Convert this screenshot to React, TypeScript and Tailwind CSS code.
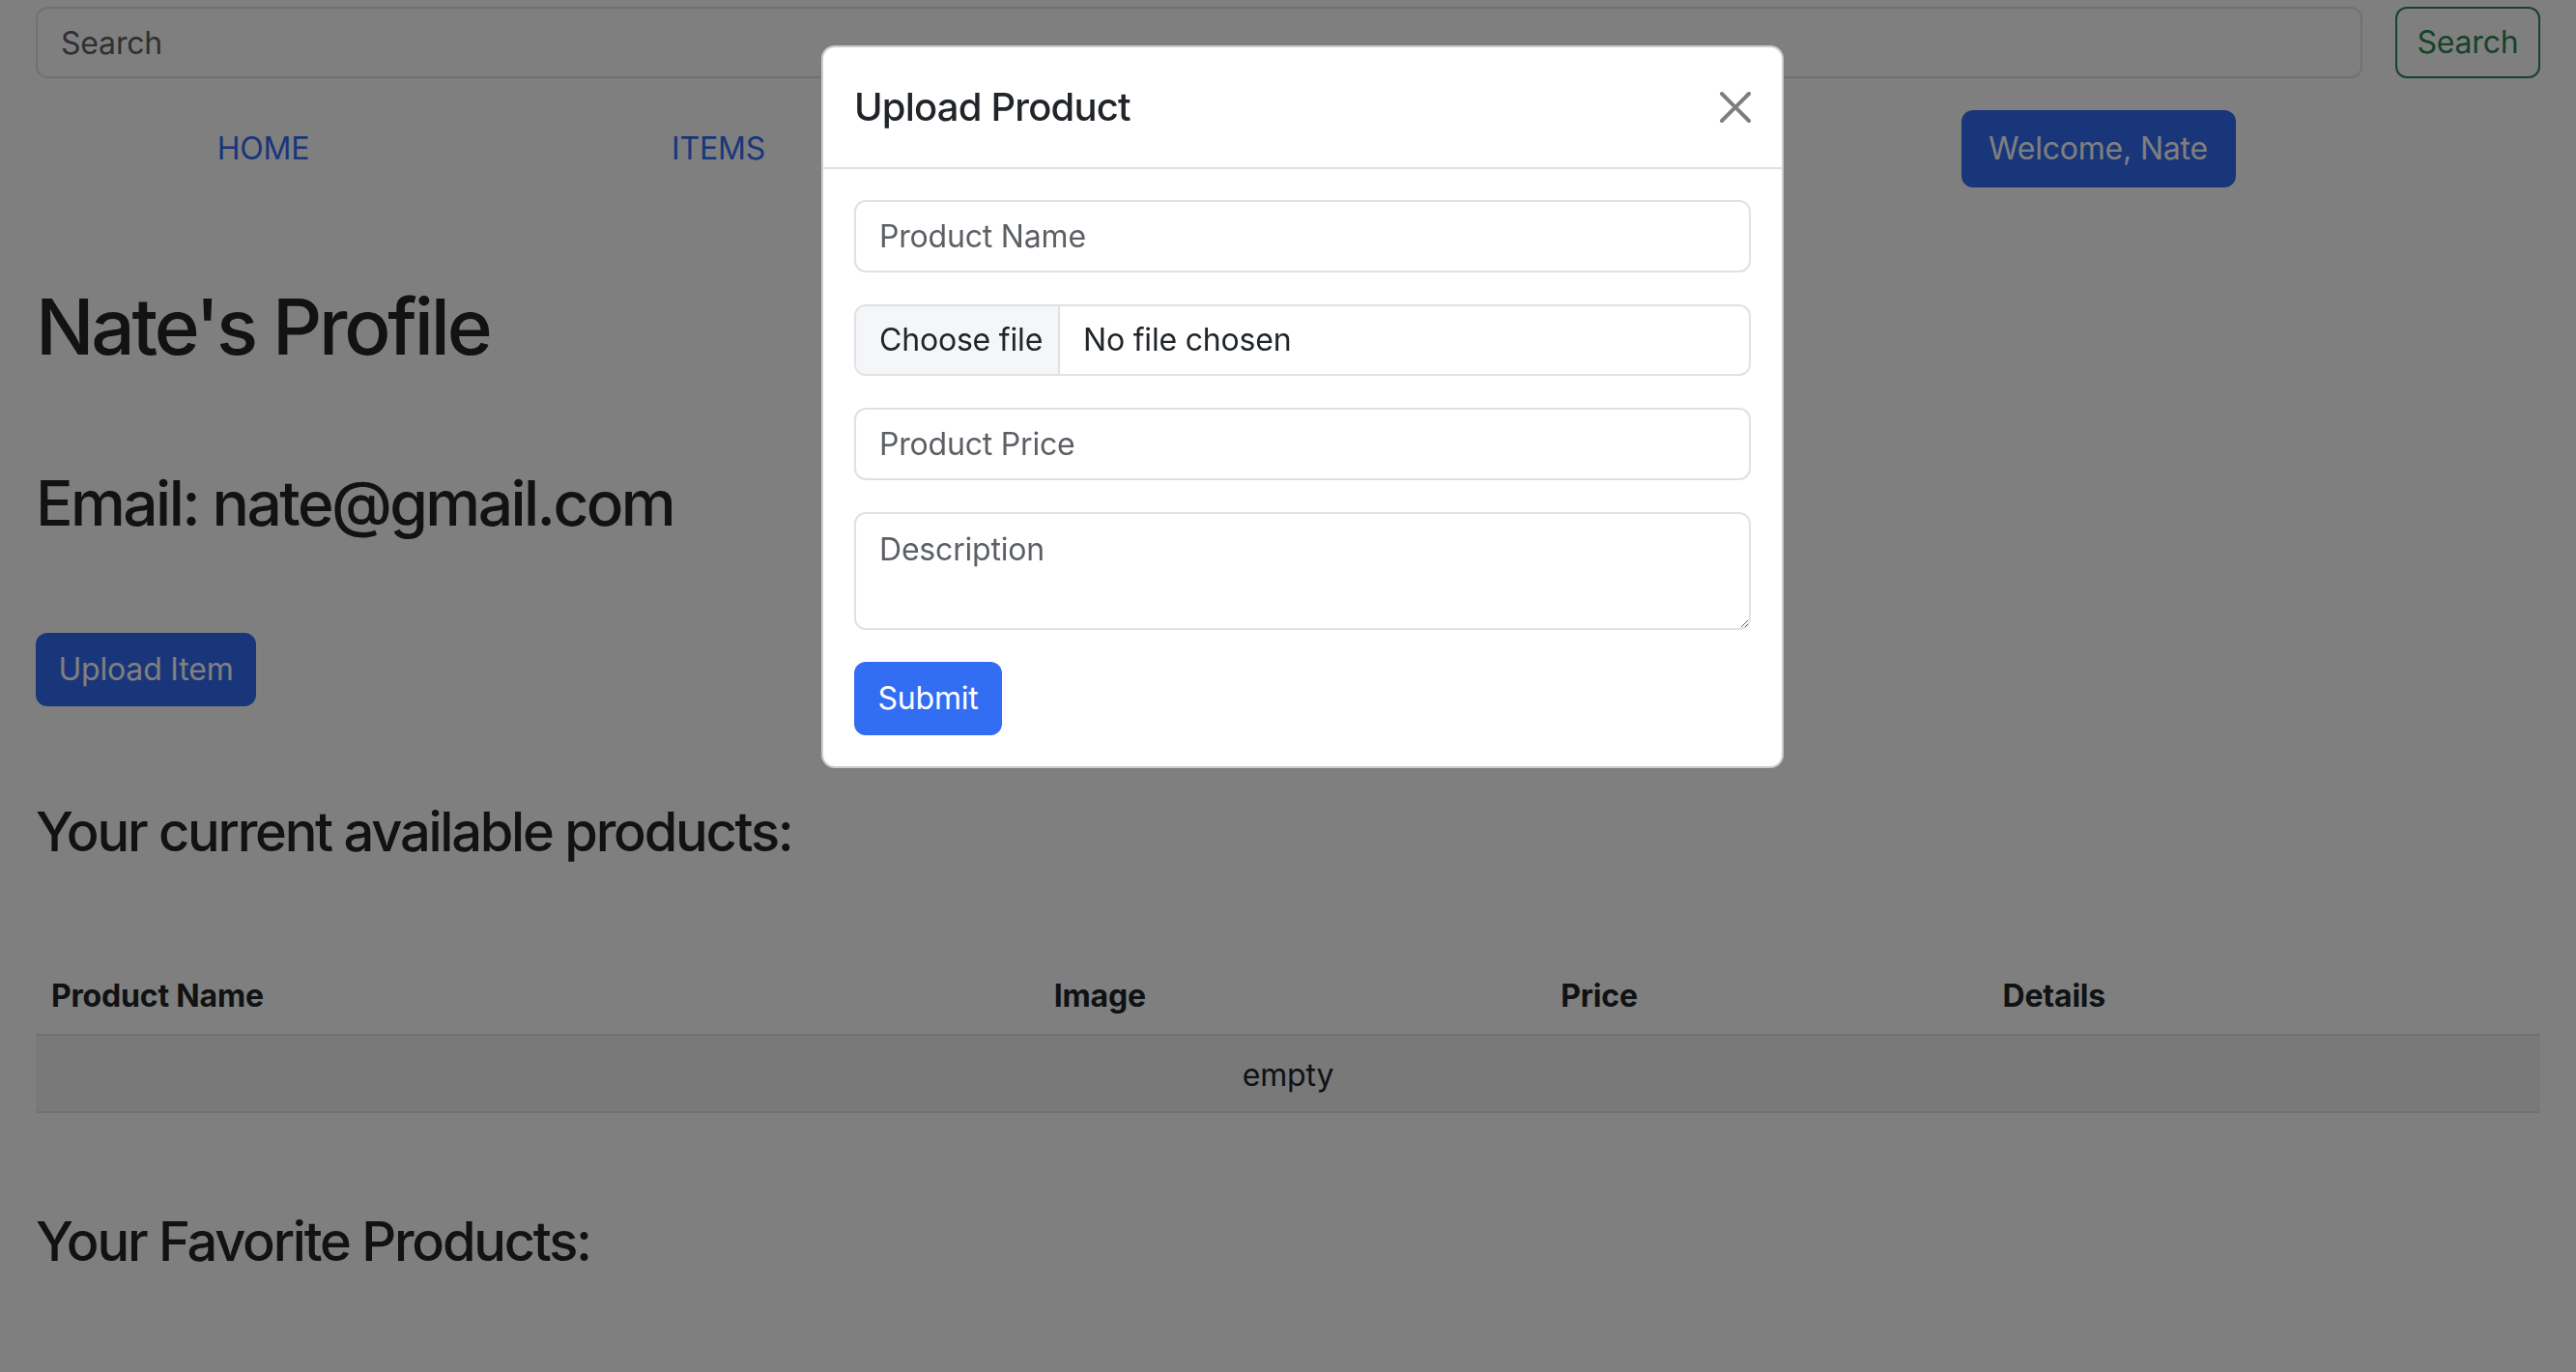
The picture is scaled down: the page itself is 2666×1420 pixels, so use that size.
import { useState } from "react"

// table columns, widths taken from the layout
const columns = [
  { title: "Product Name", width: "w-[1037px]" },
  { title: "Image", width: "w-[524px]" },
  { title: "Price", width: "w-[457px]" },
  { title: "Details", width: "w-[572px]" },
]

function CloseIcon() {
  return (
    <svg viewBox="0 0 16 16" className="h-[32px] w-[32px]" fill="currentColor">
      <path d="M.293.293a1 1 0 0 1 1.414 0L8 6.586 14.293.293a1 1 0 1 1 1.414 1.414L9.414 8l6.293 6.293a1 1 0 0 1-1.414 1.414L8 9.414l-6.293 6.293a1 1 0 0 1-1.414-1.414L6.586 8 .293 1.707a1 1 0 0 1 0-1.414" />
    </svg>
  )
}

function UploadModal() {
  return (
    <>
      {/* backdrop */}
      <div className="fixed inset-0 z-40 bg-black/50" />

      <div className="fixed left-[850px] top-[47px] z-50 w-[996px] rounded-[14px] border-2 border-black/20 bg-white">
        <div className="flex items-center justify-between border-b-2 border-[#dee2e6] px-[32px] py-[32px]">
          <h5 className="text-[40px] leading-[60px] font-medium tracking-[-0.02em] text-[#212529]">Upload Product</h5>
          <button className="flex h-[48px] w-[34px] items-center justify-end text-black opacity-50" aria-label="Close">
            <CloseIcon />
          </button>
        </div>

        <form className="flex flex-col gap-[33px] p-[32px] tracking-[-0.012em]">
          <input
            placeholder="Product Name"
            className="h-[75px] rounded-[12px] border-2 border-[#dee2e6] px-[24px] text-[32px] text-[#212529] outline-none placeholder:text-[#5c6065]"
          />
          <div className="flex h-[74px] overflow-hidden rounded-[12px] border-2 border-[#dee2e6] text-[32px] text-[#212529]">
            <div className="flex w-[211px] items-center whitespace-nowrap border-r-2 border-[#dee2e6] bg-[#f5f6f7] px-[24px]">
              Choose file
            </div>
            <div className="flex items-center whitespace-nowrap px-[24px]">No file chosen</div>
          </div>
          <input
            placeholder="Product Price"
            className="h-[75px] rounded-[12px] border-2 border-[#dee2e6] px-[24px] text-[32px] text-[#212529] outline-none placeholder:text-[#5c6065]"
          />
          <textarea
            placeholder="Description"
            className="h-[122px] resize-y rounded-[12px] border-2 border-[#dee2e6] px-[24px] py-[13px] text-[32px] leading-[48px] text-[#212529] outline-none placeholder:text-[#5c6065]"
          />
          <div>
            <button type="button" className="h-[76px] w-[153px] rounded-[12px] bg-[#336df4] text-[32px] text-white">
              Submit
            </button>
          </div>
        </form>
      </div>
    </>
  )
}

export default function App() {
  const [showModal] = useState(true)

  return (
    <div className="min-h-screen bg-white font-[Inter,sans-serif] text-[#212529]">
      <div className="flex flex-col px-[37px] pt-[7px] tracking-[-0.012em]">
        {/* search bar */}
        <form className="flex gap-[34px]">
          <input
            placeholder="Search"
            className="h-[74px] flex-1 rounded-[12px] border-2 border-[#dee2e6] px-[24px] text-[32px] outline-none placeholder:text-[#5c6065]"
          />
          <button type="button" className="h-[74px] w-[150px] rounded-[12px] border-2 border-[#2e8555] text-[32px] text-[#2e8555]">
            Search
          </button>
        </form>

        {/* nav */}
        <nav className="mt-[33px] grid h-[80px] grid-cols-[repeat(5,471px)] items-center">
          <a className="justify-self-center text-[32px] text-[#336df4]">HOME</a>
          <a className="justify-self-center text-[32px] text-[#336df4]">ITEMS</a>
          <div />
          <div />
          <button className="ml-[30px] h-[80px] w-[284px] justify-self-center rounded-[12px] bg-[#336df4] text-[32px] text-white">
            Welcome, Nate
          </button>
        </nav>

        <h1 className="mt-[96px] text-[80px] leading-[96px] font-medium tracking-[-0.04em]">Nate's Profile</h1>
        <h2 className="mt-[96px] text-[64px] leading-[77px] font-medium tracking-[-0.04em]">Email: nate@gmail.com</h2>

        <div className="mt-[96px]">
          <button className="h-[76px] w-[228px] rounded-[12px] bg-[#336df4] text-[32px] text-white">Upload Item</button>
        </div>

        <h3 className="mt-[97px] text-[56px] leading-[67px] font-medium tracking-[-0.04em]">Your current available products:</h3>

        <table className="mt-[96px] w-full table-fixed border-collapse text-[32px]">
          <colgroup>
            {columns.map((c) => (
              <col key={c.title} className={c.width} />
            ))}
          </colgroup>
          <thead>
            <tr className="border-b-2 border-[#dee2e6]">
              {columns.map((c) => (
                <th key={c.title} className="h-[80px] px-[16px] text-left font-bold">
                  {c.title}
                </th>
              ))}
            </tr>
          </thead>
          <tbody>
            <tr className="border-b-2 border-[#dee2e6] bg-black/5">
              <td colSpan={4} className="h-[80px] px-[16px] pt-[3px] text-center">
                empty
              </td>
            </tr>
          </tbody>
        </table>

        <h3 className="mt-[100px] text-[56px] leading-[67px] font-medium tracking-[-0.04em]">Your Favorite Products:</h3>
      </div>

      {showModal && <UploadModal />}
    </div>
  )
}
